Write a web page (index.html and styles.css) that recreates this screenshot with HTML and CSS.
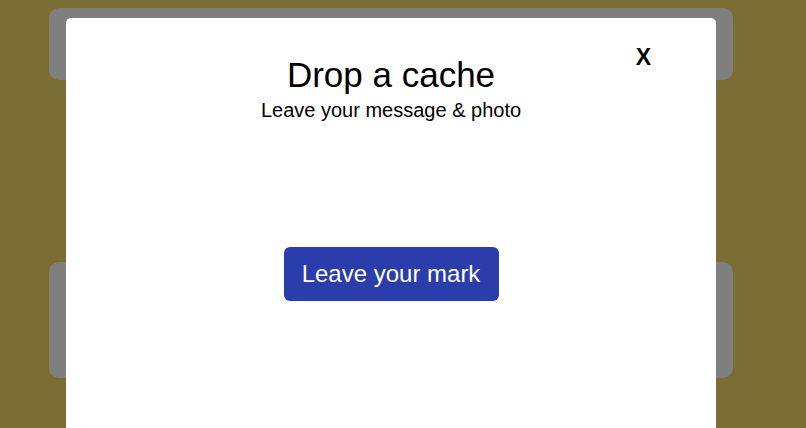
FILE: index.html
```html
<!DOCTYPE html>
<html lang="en">
<head>
  <meta charset="UTF-8">
  <meta name="viewport" content="width=device-width, initial-scale=1.0">
  <title>Drop a cache</title>
  <link rel="stylesheet" href="styles.css">
</head>
<body>
  <div class="page">
    <div class="card card-top"></div>
    <div class="card card-mid"></div>
  </div>

  <div class="overlay">
    <div class="modal">
      <button class="close" type="button">X</button>
      <h1 class="modal-title">Drop a cache</h1>
      <p class="modal-subtitle">Leave your message &amp; photo</p>
      <button class="mark-btn" type="button">Leave your mark</button>
    </div>
  </div>
</body>
</html>
```

FILE: styles.css
```css
html, body {
  margin: 0;
  height: 100%;
}

body {
  font-family: "Liberation Sans", Arial, sans-serif;
  background-color: #f5dd68;
  overflow: hidden;
}

.page {
  width: 684px;
  padding: 8px 0 0 49px;
  display: flex;
  flex-direction: column;
  gap: 182px;
}

.card {
  background-color: #fff;
  border-radius: 10px;
}

.card-top {
  height: 72px;
}

.card-mid {
  height: 116px;
}

.overlay {
  position: fixed;
  inset: 0;
  background-color: rgba(0, 0, 0, 0.5);
  display: flex;
  justify-content: center;
  align-items: flex-start;
  padding-top: 18px;
  padding-right: 24px;
}

.modal {
  position: relative;
  width: 650px;
  height: 600px;
  background-color: #fff;
  border-radius: 5px;
  display: flex;
  flex-direction: column;
  align-items: center;
  padding-top: 37px;
  box-sizing: border-box;
}

.close {
  position: absolute;
  top: 26px;
  right: 65px;
  background: none;
  border: none;
  padding: 0;
  font-family: "Liberation Sans", Arial, sans-serif;
  font-size: 23px;
  font-weight: bold;
  color: #000;
  cursor: pointer;
}

.modal-title {
  margin: 0;
  font-size: 35px;
  font-weight: normal;
  color: #000;
}

.modal-subtitle {
  margin: 4px 0 0;
  font-size: 20px;
  color: #000;
}

.mark-btn {
  margin-top: 125px;
  width: 215px;
  height: 54px;
  background-color: #2a3dab;
  color: #fff;
  border: none;
  border-radius: 6px;
  font-family: "Liberation Sans", Arial, sans-serif;
  font-size: 24px;
  cursor: pointer;
}
```
